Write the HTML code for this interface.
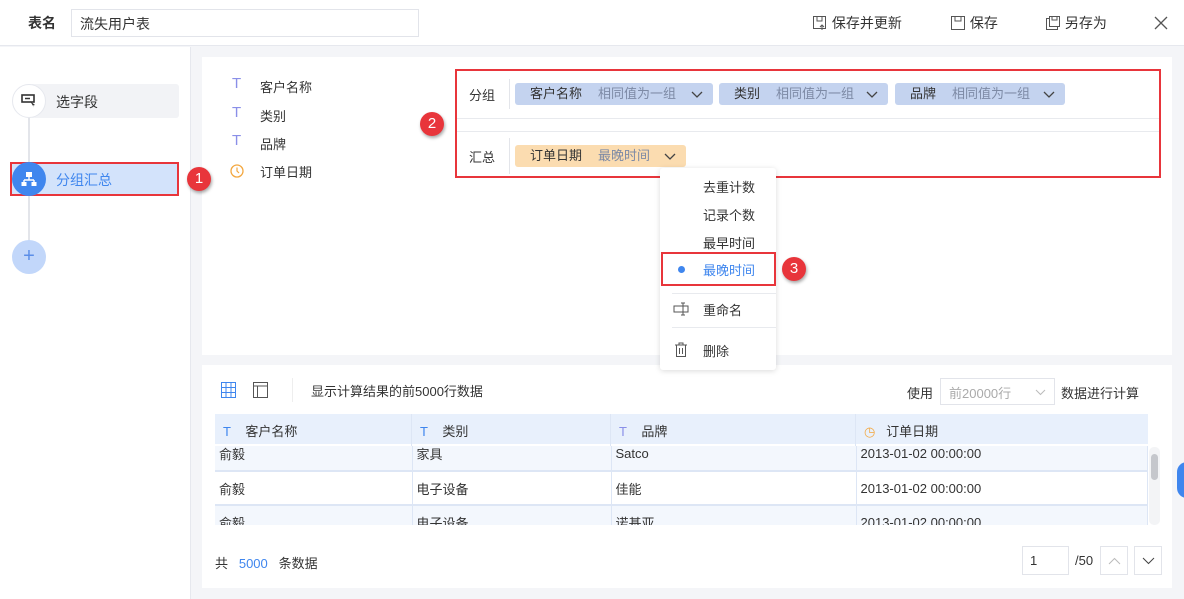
<!DOCTYPE html><html><head><meta charset="utf-8"><style>
*{box-sizing:border-box;margin:0;padding:0}
body{width:1184px;height:599px;overflow:hidden;position:relative;background:#f4f5f8;font-family:"Liberation Sans","Noto Sans CJK SC",sans-serif;font-size:13px;color:#333}
.a{position:absolute}
.chip{position:absolute;height:22px;border-radius:3px;background:#c4d3ef;font-size:13px;line-height:22px;padding-left:15px;white-space:nowrap}
.chip span{color:#7d8aa5;margin-left:16px}
.chip svg{position:absolute;right:10px;top:8px}
.badge{position:absolute;z-index:10;width:24px;height:24px;border-radius:50%;background:#e8353b;color:#fff;font-size:15px;text-align:center;line-height:24px;box-shadow:1px 2px 3px rgba(0,0,0,.35)}
.T{color:#8a8fe8;font-size:15px}
td{border-right:1px solid #dde6f5;border-bottom:2px solid #dde6f5;padding-left:4px;height:34px;font-size:13px;color:#333}
.dd{z-index:5}
</style></head><body>
<div class="a" style="left:0;top:0;width:1184px;height:46px;background:#fff;border-bottom:1px solid #e6e8ee"></div>
<div class="a" style="left:28px;top:13px;font-weight:bold;font-size:14px">表名</div>
<div class="a" style="left:71px;top:9px;width:348px;height:28px;border:1px solid #e2e4ea;padding:4px 8px;font-size:14px">流失用户表</div>
<div class="a" style="left:812px;top:13px;font-size:14px">
<svg width="16" height="16" style="vertical-align:-3px"><rect x="1.5" y="1.5" width="12" height="12" fill="none" stroke="#555"/><path d="M5 2v4h5V2M10 10v5M8 12l2-2 2 2" stroke="#555" fill="none"/></svg> 保存并更新</div>
<div class="a" style="left:950px;top:13px;font-size:14px"><svg width="16" height="16" style="vertical-align:-3px"><rect x="1.5" y="1.5" width="13" height="13" fill="none" stroke="#555"/><path d="M5 2v4h6V2" stroke="#555" fill="none"/></svg> 保存</div>
<div class="a" style="left:1045px;top:13px;font-size:14px"><svg width="16" height="16" style="vertical-align:-3px"><rect x="1.5" y="3.5" width="11" height="11" fill="none" stroke="#555"/><rect x="4.5" y="1.5" width="10" height="10" fill="#fff" stroke="#555"/><path d="M7 2v3h5V2" stroke="#555" fill="none"/></svg> 另存为</div>
<svg class="a" style="left:1154px;top:16px" width="14" height="14"><path d="M1 1l12 12M13 1L1 13" stroke="#555" stroke-width="1.3"/></svg>
<div class="a" style="left:0;top:47px;width:191px;height:552px;background:#fff;border-right:1px solid #e6e8ee"></div>
<div class="a" style="left:28px;top:118px;width:2px;height:130px;background:#e3e5ea"></div>
<div class="a" style="left:30px;top:84px;width:149px;height:34px;background:#f2f3f6;border-radius:3px"></div>
<div class="a" style="left:12px;top:84px;width:34px;height:34px;border-radius:50%;background:#fff;border:1px solid #e6e8ee"></div>
<svg class="a" style="left:21px;top:94px" width="16" height="14"><rect x="1" y="1" width="12" height="7" fill="none" stroke="#333" stroke-width="1.6"/><path d="M4 4.5h5" stroke="#333" stroke-width="1.5"/><path d="M9 7l5 4-2 .5 1 2" fill="#333"/></svg>
<div class="a" style="left:56px;top:92px;font-size:14px">选字段</div>
<div class="a" style="left:10px;top:162px;width:169px;height:34px;background:#d3e3fb;border:2px solid #e8353b"></div>
<div class="a" style="left:12px;top:162px;width:34px;height:34px;border-radius:50%;background:#3f86ee"></div>
<svg class="a" style="left:21px;top:171px" width="16" height="16"><rect x="5" y="1" width="6" height="5" fill="#fff"/><path d="M8 6v3M3 9h10M3 9v2M13 9v2" stroke="#fff" stroke-width="1.4" fill="none"/><rect x="0.5" y="11" width="5" height="4" fill="#fff"/><rect x="10.5" y="11" width="5" height="4" fill="#fff"/></svg>
<div class="a" style="left:56px;top:170px;font-size:14px;color:#3f86ee">分组汇总</div>
<div class="badge" style="left:187px;top:167px">1</div>
<div class="a" style="left:12px;top:240px;width:34px;height:34px;border-radius:50%;background:#c2d7fa;color:#5b8ee8;font-size:20px;text-align:center;line-height:32px">+</div>
<div class="a" style="left:202px;top:57px;width:970px;height:298px;background:#fff"></div>
<div class="a T" style="left:232px;top:75px">T</div><div class="a" style="left:260px;top:77px">客户名称</div>
<div class="a T" style="left:232px;top:104px">T</div><div class="a" style="left:260px;top:106px">类别</div>
<div class="a T" style="left:232px;top:132px">T</div><div class="a" style="left:260px;top:134px">品牌</div>
<svg class="a" style="left:230px;top:164px" width="14" height="14"><circle cx="7" cy="7" r="6" fill="none" stroke="#f3a73f" stroke-width="1.3"/><path d="M7 3.5V7l2 2" stroke="#f3a73f" fill="none" stroke-width="1.2"/></svg>
<div class="a" style="left:260px;top:162px">订单日期</div>
<div class="badge" style="left:420px;top:112px">2</div>
<div class="a" style="left:455px;top:69px;width:706px;height:109px;border:2px solid #e8353b"></div>
<div class="a" style="left:457px;top:118px;width:702px;height:1px;background:#e8eaee"></div>
<div class="a" style="left:457px;top:131px;width:702px;height:1px;background:#e8eaee"></div>
<div class="a" style="left:469px;top:85px">分组</div>
<div class="a" style="left:509px;top:79px;width:1px;height:30px;background:#e3e5ea"></div>
<div class="a" style="left:469px;top:147px">汇总</div>
<div class="a" style="left:509px;top:138px;width:1px;height:36px;background:#e3e5ea"></div>
<div class="chip" style="left:515px;top:83px;width:198px">客户名称<span>相同值为一组</span><svg width="12" height="8"><path d="M1 1l5 5 5-5" stroke="#444" fill="none" stroke-width="1.3"/></svg></div>
<div class="chip" style="left:719px;top:83px;width:169px">类别<span>相同值为一组</span><svg width="12" height="8"><path d="M1 1l5 5 5-5" stroke="#444" fill="none" stroke-width="1.3"/></svg></div>
<div class="chip" style="left:895px;top:83px;width:170px">品牌<span>相同值为一组</span><svg width="12" height="8"><path d="M1 1l5 5 5-5" stroke="#444" fill="none" stroke-width="1.3"/></svg></div>
<div class="chip" style="left:515px;top:145px;width:171px;background:#fbdcb0">订单日期<span>最晚时间</span><svg width="12" height="8"><path d="M1 1l5 5 5-5" stroke="#444" fill="none" stroke-width="1.3"/></svg></div>
<div class="a" style="left:202px;top:365px;width:970px;height:223px;background:#fff"></div>
<!-- dropdown -->
<div class="a dd" style="left:660px;top:168px;width:116px;height:202px;background:#fff;box-shadow:0 1px 6px rgba(0,0,0,.15);border-radius:3px"></div>
<div class="a dd" style="left:703px;top:177px">去重计数</div>
<div class="a dd" style="left:703px;top:205px">记录个数</div>
<div class="a dd" style="left:703px;top:233px">最早时间</div>
<div class="a dd" style="left:661px;top:252px;width:115px;height:34px;border:2px solid #e8353b"></div>
<div class="a dd" style="left:678px;top:266px;width:7px;height:7px;border-radius:50%;background:#3f86ee"></div>
<div class="a dd" style="left:703px;top:260px;color:#3f86ee">最晚时间</div>
<div class="badge" style="left:782px;top:257px">3</div>
<div class="a dd" style="left:672px;top:293px;width:104px;height:1px;background:#e8eaee"></div>
<svg class="a dd" style="left:673px;top:301px" width="18" height="16"><rect x="1" y="5" width="14" height="6" fill="none" stroke="#555"/><path d="M10 2v12M8 2h4M8 14h4" stroke="#555" fill="none"/></svg>
<div class="a dd" style="left:703px;top:300px">重命名</div>
<div class="a dd" style="left:672px;top:327px;width:104px;height:1px;background:#e8eaee"></div>
<svg class="a dd" style="left:674px;top:342px" width="14" height="16"><path d="M1 3h12M5 3V1h4v2M2.5 3v11.5h9V3M5.5 6v6M8.5 6v6" stroke="#555" fill="none"/></svg>
<div class="a dd" style="left:703px;top:341px">删除</div>
<svg class="a" style="left:221px;top:382px" width="15" height="16"><rect x="0.5" y="0.5" width="14" height="15" fill="none" stroke="#3f86ee"/><path d="M5 1v15M10 1v15M1 5.5h14M1 10.5h14" stroke="#3f86ee"/></svg>
<svg class="a" style="left:253px;top:382px" width="15" height="16"><rect x="0.5" y="0.5" width="14" height="15" fill="none" stroke="#555"/><path d="M1 4h14M4.5 4v12" stroke="#555"/></svg>
<div class="a" style="left:292px;top:378px;width:1px;height:24px;background:#eee"></div>
<div class="a" style="left:311px;top:381px">显示计算结果的前5000行数据</div>
<div class="a" style="left:907px;top:383px">使用</div>
<div class="a" style="left:940px;top:378px;width:115px;height:27px;border:1px solid #e2e4ea;color:#aaa;padding:4px 8px">前20000行<svg style="position:absolute;right:8px;top:10px" width="11" height="7"><path d="M1 1l4.5 4.5L10 1" stroke="#bbb" fill="none"/></svg></div>
<div class="a" style="left:1061px;top:383px">数据进行计算</div>
<div class="a" style="left:215px;top:414px;width:933px;height:111px;overflow:hidden">
<table style="border-collapse:collapse;width:933px;table-layout:fixed;position:absolute;top:23px">
<tr style="background:#f3f7fd"><td style="width:197px">俞毅</td><td style="width:199px">家具</td><td style="width:245px">Satco</td><td>2013-01-02 00:00:00</td></tr>
<tr><td>俞毅</td><td>电子设备</td><td>佳能</td><td>2013-01-02 00:00:00</td></tr>
<tr style="background:#f3f7fd"><td>俞毅</td><td>电子设备</td><td>诺基亚</td><td>2013-01-02 00:00:00</td></tr>
</table>
<div style="position:absolute;top:0;left:0;width:933px;height:32px;background:#e8f0fc;border-bottom:2px solid #fff">
<div style="position:absolute;left:0;top:0;width:197px;height:32px;border-right:1px solid #dde6f5;padding:7px 8px"><span style="color:#3f86ee">T</span>&nbsp;&nbsp;&nbsp;&nbsp;客户名称</div>
<div style="position:absolute;left:197px;top:0;width:199px;height:32px;border-right:1px solid #dde6f5;padding:7px 8px"><span style="color:#3f86ee">T</span>&nbsp;&nbsp;&nbsp;&nbsp;类别</div>
<div style="position:absolute;left:396px;top:0;width:245px;height:32px;border-right:1px solid #dde6f5;padding:7px 8px"><span style="color:#8a8fe8">T</span>&nbsp;&nbsp;&nbsp;&nbsp;品牌</div>
<div style="position:absolute;left:641px;top:0;width:292px;height:32px;padding:7px 8px"><span style="color:#f3a73f">◷</span>&nbsp;&nbsp;&nbsp;订单日期</div>
</div>
</div>
<div class="a" style="left:1149px;top:447px;width:11px;height:78px;background:#f3f4f6;border-radius:5px"></div>
<div class="a" style="left:1151px;top:454px;width:7px;height:26px;background:#c5c7cc;border-radius:4px"></div>
<div class="a" style="left:215px;top:553px">共&nbsp;&nbsp;&nbsp;<span style="color:#3f86ee">5000</span>&nbsp;&nbsp;&nbsp;条数据</div>
<div class="a" style="left:1022px;top:546px;width:47px;height:29px;border:1px solid #e2e4ea;padding:6px 7px">1</div>
<div class="a" style="left:1075px;top:553px">/50</div>
<div class="a" style="left:1100px;top:546px;width:28px;height:29px;border:1px solid #e2e4ea"><svg style="margin:10px 7px" width="13" height="8"><path d="M1 7l5.5-5.5L12 7" stroke="#bbb" fill="none"/></svg></div>
<div class="a" style="left:1134px;top:546px;width:28px;height:29px;border:1px solid #e2e4ea"><svg style="margin:10px 7px" width="13" height="8"><path d="M1 1l5.5 5.5L12 1" stroke="#444" fill="none"/></svg></div>
<div class="a" style="left:1177px;top:462px;width:20px;height:36px;border-radius:18px;background:#3f86ee"></div>
</body></html>
